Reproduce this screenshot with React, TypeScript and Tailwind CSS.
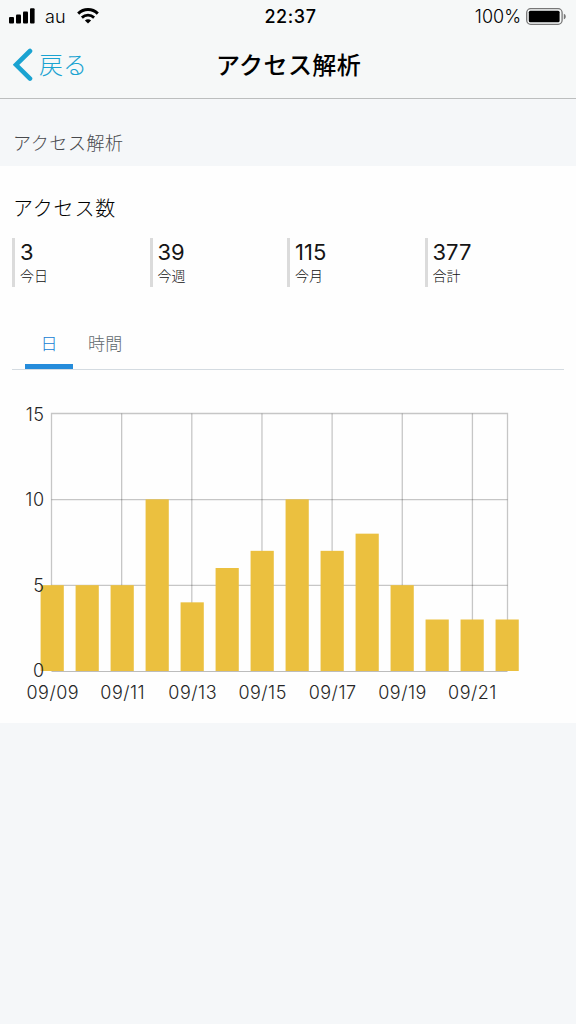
const STATS = [
  { value: 3, label: '今日' },
  { value: 39, label: '今週' },
  { value: 115, label: '今月' },
  { value: 377, label: '合計' },
];

const DAILY = [5, 5, 5, 10, 4, 6, 7, 10, 7, 8, 5, 3, 3, 3];
const DATES = ['09/09', '09/11', '09/13', '09/15', '09/17', '09/19', '09/21'];

// Plot area of the chart, in svg units
const LEFT = 51.5;
const RIGHT = 507.5;
const TOP = 43.5;
const BOTTOM = 301;
const STEP = (RIGHT - LEFT) / (DAILY.length - 1);
const UNIT = (BOTTOM - TOP) / 15;

function StatusBar() {
  return (
    <div className="relative flex h-8 items-center justify-between pl-[9px] pr-[9px] text-black">
      <div className="flex items-center">
        <svg width="26" height="16" viewBox="0 0 26 16">
          <rect x="0" y="9" width="5" height="6.5" rx="1" />
          <rect x="7" y="6.5" width="5" height="9" rx="1" />
          <rect x="14" y="3.5" width="5" height="12" rx="1" />
          <rect x="21" y="0.3" width="4.6" height="15.2" rx="1" />
        </svg>
        <span className="ml-[10px] pt-px text-[18px] font-[350] leading-8">au</span>
        <svg className="ml-[11px]" width="22" height="16" viewBox="0 0 22 16" fill="none" stroke="black">
          <path d="M1.2 5.6C6.8.2 15.2.2 20.8 5.6" strokeWidth="3" />
          <path d="M4.9 9.6c3.5-3.2 8.7-3.2 12.2 0" strokeWidth="2.8" />
          <path d="M11 15.4 7.9 12.4c1.8-1.4 4.4-1.4 6.2 0z" fill="black" stroke="none" />
        </svg>
      </div>
      <span className="absolute inset-x-0 pl-[5px] pt-px text-center text-[18px] font-medium leading-8 tracking-[0.6px]">22:37</span>
      <div className="flex items-center">
        <span className="mr-[5px] pt-px text-[18px] font-[350] leading-8">100%</span>
        <svg width="41" height="17" viewBox="0 0 41 17">
          <rect x="0.7" y="0.7" width="35.4" height="15.6" rx="4" fill="none" stroke="#777" strokeWidth="1.3" />
          <rect x="2.8" y="2.8" width="30.8" height="11.4" rx="1.5" />
          <path d="M37.8 5.7c2.6.8 2.6 4.8 0 5.6z" fill="#777" />
        </svg>
      </div>
    </div>
  );
}

function NavBar() {
  return (
    <div className="relative flex h-[66px] items-center pl-[13px]">
      <svg width="20" height="34" viewBox="0 0 20 34" fill="none" stroke="#1aa3d1" strokeWidth="4.6">
        <path d="M17 3 3 16.8 17 30.6" strokeLinecap="round" />
      </svg>
      <span className="ml-[6px] pt-px text-[24px] font-light leading-[66px] text-[#1aa3d1]">戻る</span>
      <h1 className="absolute inset-x-0 pl-px pt-px text-center text-[24px] font-medium leading-[66px] tracking-[0.4px] text-black">
        アクセス解析
      </h1>
    </div>
  );
}

function AccessChart() {
  return (
    <svg className="block" width="576" height="353" viewBox="0 0 576 353">
      <g stroke="#000" strokeOpacity="0.22" strokeWidth="1.3">
        {DATES.slice(1).map((date, i) => (
          <path key={date} d={`M${LEFT + (i + 1) * 2 * STEP} ${TOP}V${BOTTOM}`} />
        ))}
        {[5, 10].map((n) => (
          <path key={n} d={`M${LEFT} ${BOTTOM - n * UNIT + 0.3}H${RIGHT}`} />
        ))}
        <path d={`M${LEFT} ${BOTTOM}V${TOP}H${RIGHT}V${BOTTOM}`} fill="none" />
      </g>
      {DAILY.map((count, i) => (
        <rect
          key={i}
          x={LEFT + i * STEP - 10.9 - i * 0.08}
          y={BOTTOM - count * UNIT}
          width="23.2"
          height={count * UNIT}
          fill="#ebc03f"
        />
      ))}
      <path d={`M${LEFT} 301.5H${RIGHT}`} stroke="#bcbcbc" strokeWidth="1" />
      <g fill="#262626" fontSize="18" fontWeight="300">
        {[0, 5, 10, 15].map((n) => (
          <text key={n} x="44.5" y={307.2 - n * 17.1} textAnchor="end" letterSpacing="0.5">
            {n}
          </text>
        ))}
        {DATES.map((date, i) => (
          <text key={date} x={LEFT + i * 2 * STEP + 1.3 - i * 0.2} y="328.6" textAnchor="middle" letterSpacing="0.5">
            {date}
          </text>
        ))}
      </g>
    </svg>
  );
}

export default function App() {
  return (
    <div className="flex h-[1024px] w-[576px] flex-col overflow-hidden bg-[#f5f7f9] font-['Inter','Noto_Sans_CJK_JP',sans-serif]">
      <header className="h-[99px] border-b border-[#bcbebe] bg-[#f6f8f8]">
        <StatusBar />
        <NavBar />
      </header>

      <div className="h-[67px] pl-[13px] pt-[30px] text-[18px] font-light leading-[30px] tracking-[0.6px] text-[#48494d]">
        アクセス解析
      </div>

      <main className="h-[557px] bg-[#fefefe]">
        <h2 className="pl-[13px] pt-[28px] text-[20px] font-light leading-[30px] tracking-[0.8px] text-black">
          アクセス数
        </h2>
        <div className="mt-[14px] grid grid-cols-4 pl-3 pr-[14px]">
          {STATS.map((s) => (
            <div key={s.label} className="h-[49px] border-l-[3px] border-[#dbdbdb] pl-[5px]">
              <div className="text-[22px] font-normal leading-[29px] text-[#151515]">{s.value}</div>
              <div className="text-[14px] font-light leading-[17px] text-[#111]">{s.label}</div>
            </div>
          ))}
        </div>
        <div className="ml-3 mr-3 mt-[31px] flex h-[52px] border-b border-[#d4dbe1] pl-[13px] text-[17px] font-light leading-[53px]">
          <div className="h-[51px] w-12 border-b-[5px] border-[#258cdb] text-center text-[#1580d4]">日</div>
          <div className="ml-[15px] tracking-[0.3px] text-[#60686d]">時間</div>
        </div>
        <AccessChart />
      </main>
    </div>
  );
}
